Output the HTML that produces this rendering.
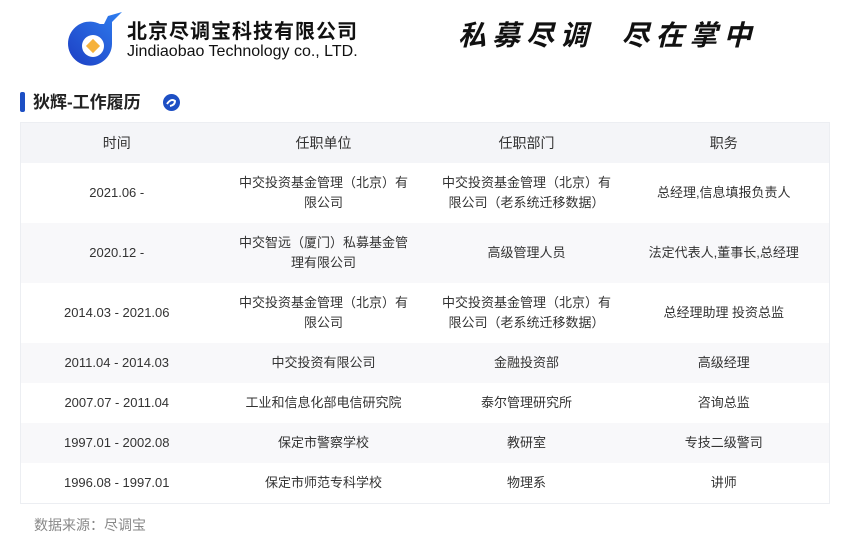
<!DOCTYPE html>
<html><head><meta charset="utf-8"><style>
body{margin:0;width:850px;height:545px;background:#fff;font-family:"Liberation Sans","Noto Sans CJK SC",sans-serif;color:#333;position:relative;overflow:hidden}
.abs{position:absolute;line-height:1}
table{position:absolute;left:20px;top:122px;width:810px;border-collapse:collapse;border:1px solid #eceef2;font-size:13px;table-layout:fixed}
th{background:#f4f5f8;height:40px;padding:0;font-weight:normal;font-size:14px;color:#333}
td{text-align:center;line-height:20px;white-space:nowrap;color:#333;padding:0}
tr.t td{height:60px}
tr.s td{height:40px}
tr:nth-child(odd) td{background:#f8f8fa}
</style></head><body>
<svg class="abs" style="left:60px;top:10px" width="64" height="60" viewBox="0 0 64 60">
<defs><linearGradient id="g" x1="0" y1="1" x2="1" y2="0"><stop offset="0" stop-color="#1d3fc4"/><stop offset="1" stop-color="#2f7ff0"/></linearGradient></defs>
<path d="M40 14 A22 22 0 1 0 52 34 L52 12 L62 2 L48 6 L44 14 Z" fill="url(#g)"/>
<circle cx="33" cy="36" r="11" fill="#fff"/>
<rect x="28" y="31" width="10" height="10" fill="#f6b23b" transform="rotate(45 33 36)"/>
</svg>
<div class="abs" style="left:127px;top:22px;font-size:20px;font-weight:bold;color:#111;letter-spacing:1px">北京尽调宝科技有限公司</div>
<div class="abs" style="left:127px;top:44px;font-size:16px;color:#111">Jindiaobao Technology co., LTD.</div>
<div class="abs" style="left:458px;top:22px;font-size:28px;font-weight:bold;font-style:italic;color:#111;letter-spacing:6px">私募尽调&nbsp;&nbsp;尽在掌中</div>
<div class="abs" style="left:20px;top:92px;width:5px;height:20px;background:#1d4fc4;border-radius:2px"></div>
<div class="abs" style="left:33px;top:94px;font-size:17px;font-weight:bold;color:#222">狄辉-工作履历</div>
<svg class="abs" style="left:162px;top:93px" width="19" height="19" viewBox="0 0 19 19"><circle cx="9.5" cy="9.5" r="8.5" fill="#1d4fc4"/><path d="M5 11 Q9 5 13 8 Q13 12 8 13" stroke="#fff" stroke-width="2" fill="none"/></svg>
<table>
<colgroup><col style="width:192px"><col style="width:222px"><col style="width:184px"><col></colgroup>
<tr><th>时间</th><th>任职单位</th><th>任职部门</th><th>职务</th></tr>
<tr class="t"><td>2021.06 -</td><td>中交投资基金管理（北京）有<br>限公司</td><td>中交投资基金管理（北京）有<br>限公司（老系统迁移数据）</td><td>总经理,信息填报负责人</td></tr>
<tr class="t"><td>2020.12 -</td><td>中交智远（厦门）私募基金管<br>理有限公司</td><td>高级管理人员</td><td>法定代表人,董事长,总经理</td></tr>
<tr class="t"><td>2014.03 - 2021.06</td><td>中交投资基金管理（北京）有<br>限公司</td><td>中交投资基金管理（北京）有<br>限公司（老系统迁移数据）</td><td>总经理助理 投资总监</td></tr>
<tr class="s"><td>2011.04 - 2014.03</td><td>中交投资有限公司</td><td>金融投资部</td><td>高级经理</td></tr>
<tr class="s"><td>2007.07 - 2011.04</td><td>工业和信息化部电信研究院</td><td>泰尔管理研究所</td><td>咨询总监</td></tr>
<tr class="s"><td>1997.01 - 2002.08</td><td>保定市警察学校</td><td>教研室</td><td>专技二级警司</td></tr>
<tr class="s"><td>1996.08 - 1997.01</td><td>保定市师范专科学校</td><td>物理系</td><td>讲师</td></tr>
</table>
<div class="abs" style="left:34px;top:518px;font-size:14px;color:#888">数据来源：尽调宝</div>
</body></html>
